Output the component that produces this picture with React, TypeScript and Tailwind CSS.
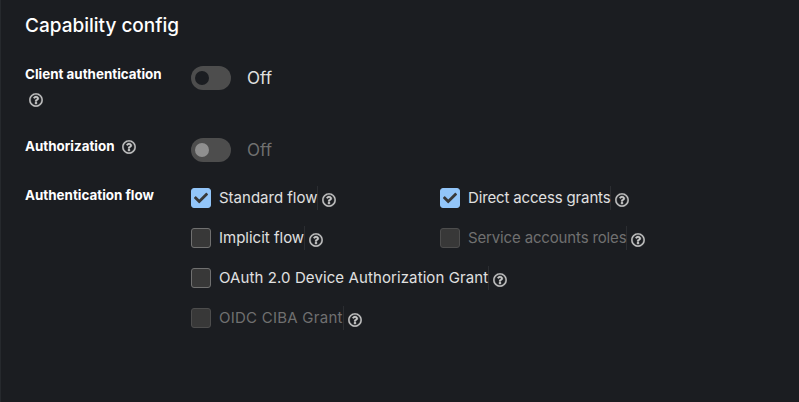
import { FaRegQuestionCircle, FaCheck } from "react-icons/fa";

function Help({ className = "" }: { className?: string }) {
  return <FaRegQuestionCircle className={`w-[14px] h-[14px] text-[#c7c7c7] shrink-0 stroke-[12px] ${className}`} />;
}

function Toggle({ disabled = false }: { disabled?: boolean }) {
  return (
    <div className="flex items-center h-6 gap-4">
      <span className="w-10 h-6 rounded-full bg-[#4d4d4d] flex items-center pl-1">
        <span className={`w-[14px] h-[14px] rounded-full ${disabled ? "bg-[#8f8f8f]" : "bg-[#1b1d21]"}`} />
      </span>
      <span className={`text-[17px] leading-6 ${disabled ? "text-[#707070]" : "text-[#e0e0e0]"}`}>Off</span>
    </div>
  );
}

function Check({
  label,
  checked = false,
  disabled = false,
  width,
  tracking,
}: {
  label: string;
  checked?: boolean;
  disabled?: boolean;
  width?: string;
  tracking?: string;
}) {
  return (
    <div className={`flex items-center h-5 ${width ?? ""}`}>
      <span
        className={`w-5 h-5 shrink-0 rounded-[3px] flex items-center justify-center border ${
          checked ? "bg-[#92c5f9] border-[#92c5f9]" : disabled ? "bg-[#383838] border-[#4d4d4d]" : "bg-[#383838] border-[#707070]"
        }`}
      >
        {checked && <FaCheck className="w-[14px] h-[14px] text-[#383838]" />}
      </span>
      <span
        className={`ml-2 text-[15px] leading-6 h-6 whitespace-nowrap border-r border-[#2b2d31] ${tracking ?? ""} ${
          disabled ? "text-[#707070]" : "text-[#e0e0e0]"
        }`}
      >
        {label}
      </span>
      <Help className="ml-[4px] mt-[3px]" />
    </div>
  );
}

export default function App() {
  return (
    <div
      className="w-[799px] h-[402px] bg-[#1b1d21] border-l border-[#26292d] overflow-hidden pl-6 pt-[13px]"
      style={{ fontFamily: "Inter, sans-serif" }}
    >
      <h2 className="text-[19px] leading-[26px] font-medium text-white">Capability config</h2>

      <div className="mt-[27px] flex">
        <div className="w-[166px] pr-1">
          <div className="text-[13.4px] leading-[22px] font-bold text-white whitespace-nowrap mt-[-3px]">
            Client authentication
          </div>
          <Help className="ml-1 mt-[8px]" />
        </div>
        <Toggle />
      </div>

      <div className="mt-[31px] flex">
        <div className="w-[166px] flex items-center h-[22px] mt-[-3px]">
          <span className="text-[13.4px] font-bold text-white">Authorization</span>
          <Help className="ml-[7px] mt-[2px]" />
        </div>
        <Toggle disabled />
      </div>

      <div className="mt-[26px] flex">
        <div className="w-[166px] text-[13.4px] leading-[22px] font-bold text-white mt-[-4px]">Authentication flow</div>
        <div className="flex flex-col gap-5">
          <div className="flex">
            <Check label="Standard flow" checked width="w-[249px]" />
            <Check label="Direct access grants" checked tracking="tracking-[-0.15px]" />
          </div>
          <div className="flex">
            <Check label="Implicit flow" width="w-[249px]" />
            <Check label="Service accounts roles" disabled tracking="tracking-[-0.15px]" />
          </div>
          <Check label="OAuth 2.0 Device Authorization Grant" tracking="tracking-[0.1px]" />
          <Check label="OIDC CIBA Grant" disabled tracking="tracking-[0.25px]" />
        </div>
      </div>
    </div>
  );
}
